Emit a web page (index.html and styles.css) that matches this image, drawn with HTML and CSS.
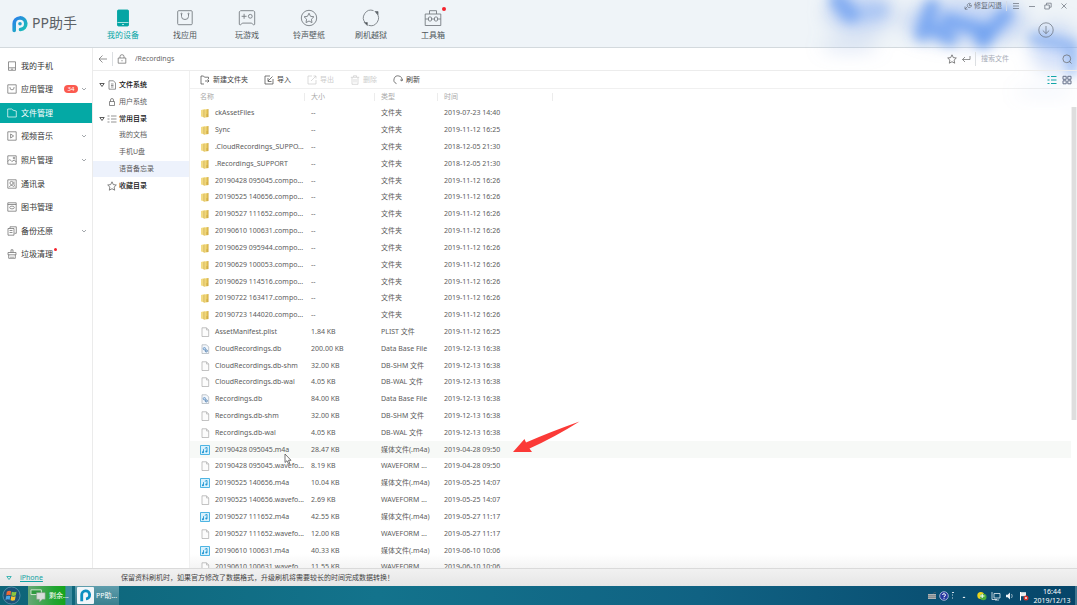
FILE: index.html
```html
<!DOCTYPE html>
<html lang="zh-CN">
<head>
<meta charset="utf-8">
<title>PP助手</title>
<link rel="stylesheet" href="styles.css">
</head>
<body>
<svg class="defs" width="0" height="0" aria-hidden="true">
  <defs>
    <linearGradient id="gold" x1="0" x2="1"><stop offset="0" stop-color="#f7e49a"/><stop offset=".5" stop-color="#ecd06a"/><stop offset="1" stop-color="#cda63a"/></linearGradient>
    <linearGradient id="brand" x1="0" y1="0" x2="1" y2="1"><stop offset="0" stop-color="#2b7fea"/><stop offset="1" stop-color="#19c2b4"/></linearGradient>
  </defs>
  <symbol id="folder" viewBox="0 0 10 10"><path d="M1 2l4-1v8.500L1 8.600z" fill="#f3dc85"/><path d="M4 1.500l4.500-.5v8L4 9.700z" fill="url(#gold)"/><path d="M4 2v7.500M7 6v3" stroke="#c29a35" stroke-width=".6"/></symbol>
  <symbol id="file" viewBox="0 0 10 10"><path d="M2 .8h4.500L8.700 3v6.500H2z" fill="#fcfcfc" stroke="#a9a9a9" stroke-width=".7"/><path d="M6.500.8V3h2.200" fill="none" stroke="#a9a9a9" stroke-width=".6"/></symbol>
  <symbol id="db" viewBox="0 0 10 10"><path d="M2 .8h4.500L8.700 3v6.500H2z" fill="#f4f8fc" stroke="#a9b0b8" stroke-width=".7"/><circle cx="4.400" cy="4.700" r="1.200" fill="#cfe0f0" stroke="#5d8fc4" stroke-width=".8"/><circle cx="6.300" cy="6.900" r="1.100" fill="#cfe0f0" stroke="#4a77a8" stroke-width=".8"/></symbol>
  <symbol id="music" viewBox="0 0 10 10"><path d="M.5.500h9v9h-9z" fill="#d9f1fc" stroke="#3cade0" stroke-width=".9"/><path d="M3.500 7.500V4.200M7 6.600V2.400L4.800 3.300" fill="none" stroke="#2196d3" stroke-width=".9"/><circle cx="2.900" cy="7.300" r="1" fill="#2196d3"/><circle cx="6.300" cy="6.600" r="1" fill="#2196d3"/></symbol>
  <symbol id="chev" viewBox="0 0 6 6"><path d="M1 2l2 2 2-2" fill="none" stroke="#8d9297" stroke-width=".8"/></symbol>
  <symbol id="star" viewBox="0 0 10 10"><path d="M5 .8l1.300 2.800 3 .4-2.200 2.100.6 3.100L5 7.700 2.300 9.200l.6-3.100L.7 4l3-.4z" fill="none" stroke="currentColor" stroke-width=".8"/></symbol>
  <symbol id="tri" viewBox="0 0 6 6"><path d="M.8 1.500h4.400L3 4.500z" fill="#fff" stroke="#333" stroke-width=".8"/></symbol>
  <symbol id="pp" viewBox="0 0 18 18"><path d="M3.200 15.500V8.800a5.800 5.800 0 1 1 6.300 5.700" fill="none" stroke="url(#brand)" stroke-width="3.600" stroke-linecap="round"/><circle cx="9" cy="8.800" r="1.800" fill="#1fa5cf"/></symbol>
</svg>
<div class="app">
  <header class="top">
    <div class="brand"><svg class="logo"><use href="#pp"/></svg><span>PP助手</span></div>
    <nav class="tabs">
      <a class="tab on" href="#device"><svg viewBox="0 0 18 18"><rect x="3.500" y="1" width="11" height="16" rx="1" fill="#04a5a4"/><path d="M3.500 13.500h11M8 15.500h2" stroke="#d6f2f2" stroke-width=".8"/></svg>我的设备</a>
      <a class="tab" href="#apps"><svg viewBox="0 0 18 18"><rect x="1.700" y="1.700" width="14.500" height="14" rx="1"/><path d="M5.500 5v2.500a3.500 3 0 0 0 7 0V5"/><circle cx="5.500" cy="4.800" r=".6"/><circle cx="12.500" cy="4.800" r=".6"/></svg>找应用</a>
      <a class="tab" href="#games"><svg viewBox="0 0 18 18"><path d="M2.500 1.700h13l1.200 1.200v12.400l-1 .8-2-2H4.300l-2 2-1-.8V2.900z"/><path d="M3.600 7.300h5M6.100 4.800v5"/><circle cx="12.300" cy="7.300" r="1.900"/></svg>玩游戏</a>
      <a class="tab" href="#ring"><svg viewBox="0 0 18 18"><circle cx="9" cy="9" r="7.700"/><path d="M9 4.200l1.500 3.100 3.400.5-2.500 2.400.6 3.400L9 12l-3 1.600.6-3.400-2.500-2.400 3.400-.5z"/></svg>铃声壁纸</a>
      <a class="tab" href="#flash"><svg viewBox="0 0 18 18"><path d="M11.500 1.600A7.600 7.600 0 0 0 3.500 14M6.500 16.300A7.600 7.600 0 0 0 14.500 4"/><path d="M13 2.500h3v3zM2.300 13.500h3v3z" fill="#444a50"/></svg>刷机越狱</a>
      <a class="tab" href="#tools"><svg viewBox="0 0 18 18"><path d="M1.200 5h15.600v11.500H1.200zM5.500 5V1.700h7V5M1.200 10h3.300M7.500 10h3M13.500 10h3.300"/><rect x="4.500" y="8" width="3" height="4" rx="1"/><rect x="10.500" y="8" width="3" height="4" rx="1"/></svg>工具箱<i class="dot"></i></a>
    </nav>
    <div class="corner">
      <div class="wins">
        <button class="fix"><svg viewBox="0 0 8 8"><path d="M1 7l2.500-2.500M3.500 4.500C2.500 2 5 .8 6.500 1.500L5 3l.6.900L7.300 3C8 5 5.500 6.300 4 5.200M1 4.500v2.700h2.500"/></svg>修复闪退</button>
        <button aria-label="菜单"><svg viewBox="0 0 8 8"><path d="M1 1.500h6M1 4h6M1 6.500h6"/></svg></button>
        <button aria-label="最小化"><svg viewBox="0 0 8 8"><path d="M1 4.500h6"/></svg></button>
        <button aria-label="还原"><svg viewBox="0 0 8 8"><path d="M.8 3h4.500v4H.8zM2.500 3V1.200h4.700v4H5.300"/></svg></button>
        <button aria-label="关闭"><svg viewBox="0 0 8 8"><path d="M1.500 1.500l5 5M6.500 1.500l-5 5"/></svg></button>
      </div>
      <button class="down" aria-label="下载"><svg viewBox="0 0 16 16"><circle cx="8" cy="8" r="7.200"/><path d="M8 4v7.500M4.800 8.500L8 11.600l3.200-3.100"/></svg></button>
    </div>
  </header>
  <svg class="haze" viewBox="0 0 277 110" aria-hidden="true">
    <defs><filter id="b1" x="-50%" y="-50%" width="200%" height="200%"><feGaussianBlur stdDeviation="6"/></filter><filter id="b2" x="-50%" y="-80%" width="200%" height="260%"><feGaussianBlur stdDeviation="9"/></filter></defs>
    <g filter="url(#b2)" fill="#a9c4f5"><ellipse cx="60" cy="12" rx="34" ry="20" opacity=".6"/><ellipse cx="50" cy="46" rx="28" ry="5" opacity=".4"/><ellipse cx="165" cy="22" rx="62" ry="22" opacity=".6"/><ellipse cx="255" cy="48" rx="24" ry="24" opacity=".5"/><ellipse cx="245" cy="92" rx="30" ry="5" opacity=".15"/></g>
    <g filter="url(#b1)" fill="none" stroke="#6c9ff0" stroke-linecap="round"><path d="M38 0l12 14" stroke-width="18" opacity=".75"/><path d="M60 14l22-4" stroke-width="14" opacity=".3"/><path d="M132 6l-10 28M128 26l22 12" stroke-width="15" opacity=".8"/><path d="M148 20l34 10M206 14l-24 26" stroke-width="15" opacity=".8"/><path d="M184 32v8" stroke-width="18" opacity=".5"/><path d="M234 38l38 8M272 50v20" stroke-width="12" opacity=".6"/></g>
  </svg>
  <div class="body">
    <nav class="side"><div class="items">
      <a href="#1"><svg viewBox="0 0 10 10"><path d="M1.500.8h7v6h-7zM1.500 6.800v2.500h7V6.800M4 8.200h2"/></svg>我的手机</a>
      <a href="#2"><svg viewBox="0 0 10 10"><path d="M.8.800h8.400v8.400H.8zM3 3v.8a2 2 0 0 0 4 0V3"/></svg>应用管理<b class="badge">34</b><svg class="chev"><use href="#chev"/></svg></a>
      <a href="#3" class="on"><svg viewBox="0 0 10 10"><path d="M.7 1h4l1.300 1.200L9.300 3v6H.7z"/></svg>文件管理</a>
      <a href="#4"><svg viewBox="0 0 10 10"><path d="M.8.800h8.400v8.400H.8zM3.600 3l3 2-3 2z"/></svg>视频音乐<svg class="chev"><use href="#chev"/></svg></a>
      <a href="#5"><svg viewBox="0 0 10 10"><path d="M.8.800h8.400v8.400H.8zM.8 6.500l2-2 2 2 2.500-1.500 2 2"/><circle cx="7" cy="3" r=".8"/></svg>照片管理<svg class="chev"><use href="#chev"/></svg></a>
      <a href="#6"><svg viewBox="0 0 10 10"><path d="M.8.800h8.400v8.400H.8zM2.500 8c0-2 4-2 4 0M7 2.500v3.500l1 1.500"/><circle cx="4.500" cy="4" r="1.600"/></svg>通讯录</a>
      <a href="#7"><svg viewBox="0 0 10 10"><path d="M.8.800h8.400v8.400H.8zM.8 2.500h8.400"/><ellipse cx="5" cy="5.500" rx="2.300" ry="1.400"/></svg>图书管理</a>
      <a href="#8"><svg viewBox="0 0 10 10"><path d="M3 2.500V.8h6.300v6.500H7.500M1 2.500h6v6.700H1zM2.500 4.500h3M2.500 6.500h3"/></svg>备份还原<svg class="chev"><use href="#chev"/></svg></a>
      <a href="#9"><svg viewBox="0 0 10 10"><path d="M4 3.500V.8h2v2.700M1 5.800V3.500h8v2.300zM1.700 5.800v3.500h6.600V5.800M4 9V7.500M6 9V7.500"/></svg>垃圾清理<i class="dot"></i></a>
    </div></nav>
    <section class="work">
      <div class="pathbar">
        <button aria-label="返回"><svg viewBox="0 0 10 10"><path d="M9 5H1M4.500 1.500L1 5l3.500 3.500"/></svg></button>
        <i class="bar"></i>
        <svg viewBox="0 0 10 10"><path d="M1.200 4h7.600v5.200H1.200zM3 4V2.500a2 1.800 0 0 1 4 0V4M5 6v1.300"/></svg>
        <input class="path" aria-label="路径" value="/Recordings">
        <button aria-label="收藏"><svg class="s"><use href="#star"/></svg></button>
        <button aria-label="前往"><svg viewBox="0 0 10 10"><path d="M9 2v3.500H1.500M4 3L1.500 5.500 4 8"/></svg></button>
        <i class="bar"></i>
        <input class="search" type="search" aria-label="搜索文件" placeholder="搜索文件">
        <button aria-label="搜索"><svg viewBox="0 0 10 10"><circle cx="4.800" cy="4.800" r="3.900"/><path d="M7.500 7.500l2 2"/></svg></button>
      </div>
      <div class="panes">
        <nav class="tree"><div class="items">
          <a class="h" href="#a"><svg class="tri"><use href="#tri"/></svg><svg viewBox="0 0 10 10"><path d="M2 .8h4.500L8.500 3v6.200H2zM4 4h2.500M4 5.500h2.500M4 7h2.500"/></svg>文件系统</a>
          <a class="sub" href="#b"><svg viewBox="0 0 10 10"><path d="M2.500 4.500h5v4h-5zM3.500 4.500V3a1.500 1.500 0 0 1 3 0v1.500"/></svg>用户系统</a>
          <a class="h" href="#c"><svg class="tri"><use href="#tri"/></svg><svg viewBox="0 0 10 10"><path d="M.5 2h2M4 2h5.500M.5 5h2M4 5h5.500M.5 8h2M4 8h5.500"/></svg>常用目录</a>
          <a class="leaf" href="#d">我的文档</a>
          <a class="leaf" href="#e">手机U盘</a>
          <a class="leaf on" href="#f">语音备忘录</a>
          <a class="h fav" href="#g"><svg><use href="#star"/></svg>收藏目录</a>
        </div></nav>
        <main class="files">
          <div class="tools">
            <button><svg viewBox="0 0 10 10"><path d="M4 9H1V1h2.500l1 1.200H8.500v2M5 6h4M7.500 4.500L9 6 7.500 7.500"/></svg>新建文件夹</button>
            <button><svg viewBox="0 0 10 10"><path d="M6 1H1v8h8V4M8.500 1.500L4 6M4 3v3.500h3.500"/></svg>导入</button>
            <button disabled><svg viewBox="0 0 10 10"><path d="M5 1H1v8h8V5M4 6l5-5M6.500 1H9v2.500"/></svg>导出</button>
            <button disabled><svg viewBox="0 0 10 10"><path d="M.8 2.300h8.400M3.500 2V.8h3V2M2 2.300v7h6v-7M4 4v3.500M6 4v3.500"/></svg>删除</button>
            <button><svg viewBox="0 0 10 10"><path d="M3.500 8.600A4 4 0 1 1 8.900 5.500M7.200 4.800l1.700 1.200 1-1.800"/></svg>刷新</button>
            <span class="views">
              <button class="list" aria-label="列表"><svg viewBox="0 0 10 10"><path d="M.5 1.500h2M4 1.500h5.500M.5 5h2M4 5h5.500M.5 8.500h2M4 8.500h5.500"/></svg></button>
              <button aria-label="网格"><svg viewBox="0 0 10 10"><path d="M1 1.300h3.200v3H1zM5.800 1.300H9v3H5.800zM1 5.800h3.200v3H1zM5.800 5.800H9v3H5.800z"/></svg></button>
            </span>
          </div>
          <div class="scroll">
            <table>
              <colgroup><col class="c1"><col class="c2"><col class="c3"><col class="c4"><col></colgroup>
              <thead><tr><th>名称</th><th>大小</th><th>类型</th><th>时间</th><th></th></tr></thead>
              <tbody>
<tr><td><svg><use href="#folder"/></svg>ckAssetFiles</td><td>--</td><td>文件夹</td><td>2019-07-23 14:40</td><td></td></tr>
<tr><td><svg><use href="#folder"/></svg>Sync</td><td>--</td><td>文件夹</td><td>2019-11-12 16:25</td><td></td></tr>
<tr><td><svg><use href="#folder"/></svg>.CloudRecordings_SUPPO...</td><td>--</td><td>文件夹</td><td>2018-12-05 21:30</td><td></td></tr>
<tr><td><svg><use href="#folder"/></svg>.Recordings_SUPPORT</td><td>--</td><td>文件夹</td><td>2018-12-05 21:30</td><td></td></tr>
<tr><td><svg><use href="#folder"/></svg>20190428 095045.compo...</td><td>--</td><td>文件夹</td><td>2019-11-12 16:26</td><td></td></tr>
<tr><td><svg><use href="#folder"/></svg>20190525 140656.compo...</td><td>--</td><td>文件夹</td><td>2019-11-12 16:26</td><td></td></tr>
<tr><td><svg><use href="#folder"/></svg>20190527 111652.compo...</td><td>--</td><td>文件夹</td><td>2019-11-12 16:26</td><td></td></tr>
<tr><td><svg><use href="#folder"/></svg>20190610 100631.compo...</td><td>--</td><td>文件夹</td><td>2019-11-12 16:26</td><td></td></tr>
<tr><td><svg><use href="#folder"/></svg>20190629 095944.compo...</td><td>--</td><td>文件夹</td><td>2019-11-12 16:26</td><td></td></tr>
<tr><td><svg><use href="#folder"/></svg>20190629 100053.compo...</td><td>--</td><td>文件夹</td><td>2019-11-12 16:26</td><td></td></tr>
<tr><td><svg><use href="#folder"/></svg>20190629 114516.compo...</td><td>--</td><td>文件夹</td><td>2019-11-12 16:26</td><td></td></tr>
<tr><td><svg><use href="#folder"/></svg>20190722 163417.compo...</td><td>--</td><td>文件夹</td><td>2019-11-12 16:26</td><td></td></tr>
<tr><td><svg><use href="#folder"/></svg>20190723 144020.compo...</td><td>--</td><td>文件夹</td><td>2019-11-12 16:26</td><td></td></tr>
<tr><td><svg><use href="#file"/></svg>AssetManifest.plist</td><td>1.84 KB</td><td>PLIST 文件</td><td>2019-11-12 16:25</td><td></td></tr>
<tr><td><svg><use href="#db"/></svg>CloudRecordings.db</td><td>200.00 KB</td><td>Data Base File</td><td>2019-12-13 16:38</td><td></td></tr>
<tr><td><svg><use href="#file"/></svg>CloudRecordings.db-shm</td><td>32.00 KB</td><td>DB-SHM 文件</td><td>2019-12-13 16:38</td><td></td></tr>
<tr><td><svg><use href="#file"/></svg>CloudRecordings.db-wal</td><td>4.05 KB</td><td>DB-WAL 文件</td><td>2019-12-13 16:38</td><td></td></tr>
<tr><td><svg><use href="#db"/></svg>Recordings.db</td><td>84.00 KB</td><td>Data Base File</td><td>2019-12-13 16:38</td><td></td></tr>
<tr><td><svg><use href="#file"/></svg>Recordings.db-shm</td><td>32.00 KB</td><td>DB-SHM 文件</td><td>2019-12-13 16:38</td><td></td></tr>
<tr><td><svg><use href="#file"/></svg>Recordings.db-wal</td><td>4.05 KB</td><td>DB-WAL 文件</td><td>2019-12-13 16:38</td><td></td></tr>
<tr class="on"><td><svg><use href="#music"/></svg>20190428 095045.m4a</td><td>28.47 KB</td><td>媒体文件(.m4a)</td><td>2019-04-28 09:50</td><td></td></tr>
<tr><td><svg><use href="#file"/></svg>20190428 095045.wavefo...</td><td>8.19 KB</td><td>WAVEFORM ...</td><td>2019-04-28 09:50</td><td></td></tr>
<tr><td><svg><use href="#music"/></svg>20190525 140656.m4a</td><td>10.04 KB</td><td>媒体文件(.m4a)</td><td>2019-05-25 14:07</td><td></td></tr>
<tr><td><svg><use href="#file"/></svg>20190525 140656.wavefo...</td><td>2.69 KB</td><td>WAVEFORM ...</td><td>2019-05-25 14:07</td><td></td></tr>
<tr><td><svg><use href="#music"/></svg>20190527 111652.m4a</td><td>42.55 KB</td><td>媒体文件(.m4a)</td><td>2019-05-27 11:17</td><td></td></tr>
<tr><td><svg><use href="#file"/></svg>20190527 111652.wavefo...</td><td>12.00 KB</td><td>WAVEFORM ...</td><td>2019-05-27 11:17</td><td></td></tr>
<tr><td><svg><use href="#music"/></svg>20190610 100631.m4a</td><td>40.33 KB</td><td>媒体文件(.m4a)</td><td>2019-06-10 10:06</td><td></td></tr>
<tr><td><svg><use href="#file"/></svg>20190610 100631.wavefo...</td><td>11.55 KB</td><td>WAVEFORM ...</td><td>2019-06-10 10:06</td><td></td></tr>
              </tbody>
            </table>
            <i class="thumb"></i>
          </div>
        </main>
      </div>
    </section>
  </div>
  <footer class="status"><svg viewBox="0 0 6 6"><path d="M.8 1.500h4.400L3 4.500z" fill="none" stroke="#18a9a7" stroke-width=".8"/></svg><a href="#iphone">iPhone</a><span>保留资料刷机时，如果官方修改了数据格式，升级刷机将需要较长的时间完成数据转换！</span></footer>
  <div class="taskbar">
    <button class="orb" aria-label="开始"><svg viewBox="0 0 20 20"><circle cx="10" cy="10" r="9" fill="#1c5278" stroke="#6da4bd" stroke-width=".7"/><path d="M5 6q2.500-1.500 4.500-.5L9 9.700q-2-1-4.500.3z" fill="#ef6a35" stroke="none"/><path d="M10.300 6q2.500 1 5 0L14.500 10q-2.500 1-4.700 0z" fill="#8cc63f" stroke="none"/><path d="M4.300 10.700q2.500-1 4.500-.2L8 14.500q-2-1-4.300.2z" fill="#4ba7e8" stroke="none"/><path d="M9.700 10.900q2.500 1 4.700 0L13.500 15q-2.500 1-4.500 0z" fill="#fbc62f" stroke="none"/></svg></button>
    <button class="task green"><svg viewBox="0 0 18 18"><path d="M1 3h11v5H1z" fill="#2f9a3f" stroke="#d5e8d3" stroke-width="1"/><path d="M7 6h9v7h-3l-3 3v-3H7z" fill="#d9dedb" stroke="#929c95" stroke-width=".6"/></svg>剩余...</button>
    <button class="task"><svg viewBox="0 0 18 18"><rect width="18" height="18" rx="1" fill="#f1f6f9"/><g fill="none" stroke="#0b8fc0"><path d="M5 15V8.500a4.200 4.200 0 1 1 4.500 4" stroke-width="3"/></g></svg>PP助...</button>
    <div class="tray">
      <svg viewBox="0 0 10 10"><path d="M1 3h8v5H1z" fill="#aeb4b6"/><path d="M1 4.700h8M1 6.300h8M6 3l1-1.500h2" stroke="#5c6569" stroke-width=".6" fill="none"/></svg>
      <svg viewBox="0 0 10 10"><circle cx="5" cy="5" r="4.300" fill="#2638a0" stroke="#d8def5" stroke-width=".7"/><path d="M3.600 4a1.400 1.400 0 1 1 1.400 1.500v.8M5 7v.8" stroke="#fff" stroke-width="1" fill="none"/></svg>
      <svg class="tiny" viewBox="0 0 4 10"><path d="M1 1.500h2M1 4h1M1 7h1" stroke="#cfe0ea" stroke-width="1"/></svg>
      <svg class="gap" viewBox="0 0 10 10"><path d="M3.500 7L5 5.500 6.500 7z" fill="#fff"/></svg>
      <svg class="wide" viewBox="0 0 10 10"><circle cx="3.800" cy="4.500" r="3.500" fill="#e9d41e"/><circle cx="6.300" cy="6" r="3.200" fill="#49ad3d"/><path d="M3 5h4.500M5.200 3v4" stroke="#fff" stroke-width="1"/></svg>
      <svg class="gap" viewBox="0 0 10 10"><path d="M3 2.500h6v4.500H3zM1 1v7.500h5M4 9h4" stroke="#e5eef3" stroke-width=".8" fill="none"/></svg>
      <svg class="gap" viewBox="0 0 10 10"><path d="M1 3.800h1.700L5 1.500v7L2.700 6.300H1z" fill="#eef3f6"/><path d="M6.500 3q1.500 2 0 4" stroke="#b9cdd8" stroke-width=".8" fill="none"/></svg>
      <svg class="gap" viewBox="0 0 10 10"><path d="M1.500 1v8.500" stroke="#fff" stroke-width="1"/><path d="M2 1.200h5v4H2z" fill="#e9eef0"/><circle cx="7" cy="7" r="2.500" fill="#d8332b"/><path d="M6 6l2 2M8 6L6 8" stroke="#fff" stroke-width=".7"/></svg>
      <time>16:44<br>2019/12/13</time>
      <i class="peek"></i>
    </div>
  </div>
  <svg class="arrow" viewBox="0 0 68 34" aria-hidden="true"><path d="M1 31L12.500 18 14 21.500Q38 11 67.500 .5 43 16 17.500 27.500L20 31z" fill="#fb3a37"/></svg>
  <svg class="cursor" viewBox="0 0 8 12" aria-hidden="true"><path d="M1 1v8.500l2-1.800 1.500 3.300 1.300-.6L4.500 7.300H7z" fill="#fff" stroke="#555" stroke-width=".8"/></svg>
</div>
</body>
</html>
```
FILE: styles.css
```css
* { box-sizing: border-box; }
body { margin: 0; font: 7px/10px "Noto Sans", "Noto Sans CJK SC", sans-serif; color: #5c5c5c; }
a { color: inherit; text-decoration: none; }
button, input { font: inherit; color: inherit; background: none; border: 0; padding: 0; margin: 0; outline: 0; }
button { display: flex; align-items: center; white-space: nowrap; }
svg { display: block; flex: none; width: 10px; height: 10px; fill: none; stroke: currentColor; stroke-width: .7px; }
use { stroke: none; }
.defs { position: absolute; width: 0; height: 0; }
.app { position: relative; height: 100vh; display: flex; flex-direction: column; overflow: hidden; background: #fff; }

.top { display: flex; flex: none; height: 48px; background: #eff4f8; border-bottom: 1px solid #d3d9dd; }
.brand { display: flex; align-items: center; gap: 3px; width: 92px; padding-left: 11px; font-size: 14px; line-height: 20px; color: #5b6166; }
.brand span { padding-bottom: 2px; }
.logo { width: 18px; height: 18px; }
.tabs { display: flex; }
.tab { position: relative; width: 62px; padding-top: 9px; display: flex; flex-direction: column; align-items: center; gap: 2px; font-size: 8px; line-height: 12px; color: #50565b; }
.tab svg { width: 18px; height: 18px; color: #777d82; stroke-width: .9px; }
.tab.on { color: #04a5a4; }
.tab.on svg { color: #04a5a4; }
.dot { width: 3px; height: 3px; border-radius: 50%; background: #f5222d; }
.tab .dot { position: absolute; top: 7px; right: 18px; width: 4px; height: 4px; }
.corner { margin-left: auto; padding: 1px 9px 0 0; display: flex; flex-direction: column; align-items: flex-end; gap: 11px; position: relative; z-index: 2; color: #666d78; }
.wins { display: flex; gap: 8px; }
.wins svg { width: 8px; height: 8px; }
.fix { gap: 2px; padding-right: 4px; margin-right: -3px; border-right: 1px solid #d3dbe8; }
.down { margin-right: 14px; }
.down svg { width: 16px; height: 16px; }
.haze { position: absolute; top: 0; right: 0; width: 277px; height: 110px; z-index: 1; pointer-events: none; }

.body { flex: 1; min-height: 0; display: flex; }
.items { display: grid; grid-auto-rows: 1fr; }
.side { flex: none; width: 93px; padding-top: 6px; border-right: 1px solid #ebebeb; font-size: 8px; color: #333; }
.side .items { height: 212px; }
.side a { display: flex; align-items: center; gap: 4px; padding: 0 5px 0 7px; white-space: nowrap; }
.side a > svg:first-child { color: #666; }
.side a.on { background: #04a9a5; color: #fff; margin: 2px 0; }
.side a.on > svg:first-child { color: #fff; }
.side .chev { width: 6px; height: 6px; margin-left: auto; }
.side .badge { margin-left: auto; width: 14px; border-radius: 4px; background: #fb5a4f; color: #fff; font-size: 6px; line-height: 8px; text-align: center; font-weight: 400; }
.side .badge + .chev { margin-left: -1px; }
.side .dot { align-self: flex-start; margin: 6px 0 0 -3px; }

.work { flex: 1; min-width: 0; display: flex; flex-direction: column; }
.pathbar { display: flex; align-items: center; gap: 4px; height: 23px; padding: 0 5px; border-bottom: 1px solid #ececec; color: #666; position: relative; z-index: 2; }
.bar { width: 1px; height: 14px; background: #dcdfe2; }
.path { flex: 1; min-width: 0; padding-left: 4px; }
.search { width: 78px; padding-left: 1px; -webkit-appearance: none; appearance: none; }
.search::placeholder { color: #a9aeb8; opacity: 1; }
.panes { flex: 1; min-height: 0; display: flex; }
.tree { flex: none; width: 96px; padding-top: 6px; }
.tree .items { height: 117px; }
.tree a { display: flex; align-items: center; }
.tree .h { gap: 2px; padding-left: 6px; color: #111; font-weight: 500; }
.tree .h svg { color: #666; }
.tree .h .tri { width: 6px; height: 6px; }
.tree .fav { padding-left: 14px; }
.tree .sub { padding-left: 14px; gap: 2px; }
.tree .leaf { padding-left: 26px; }
.tree .on { background: #edf2fc; }

.files { flex: 1; min-width: 0; display: flex; flex-direction: column; border-left: 1px solid #f0f0f0; background: linear-gradient(to top, #f4f4f4, #fff 14px); }
.tools { display: flex; align-items: center; gap: 16px; height: 18px; padding: 0 5px 0 10px; border-bottom: 1px solid #f0f0f0; flex: none; color: #444; }
.tools button { gap: 3px; }
.tools button:disabled { color: #ccc; }
.views { margin-left: auto; display: flex; gap: 5px; position: relative; z-index: 2; color: #66718a; }
.views svg { stroke-width: 1px; }
.views .list { color: #12a5a8; }
.scroll { flex: 1; min-height: 0; overflow: hidden; display: flex; align-items: flex-start; }
table { flex: 1; min-width: 0; table-layout: fixed; border-collapse: collapse; height: 487px; }
.c1 { width: 115px; } .c2 { width: 70px; } .c3 { width: 63px; } .c4 { width: 115px; }
th, td { padding: 0 0 0 6px; text-align: left; font-weight: 400; white-space: nowrap; line-height: 10px; }
th { height: 16px; color: #aaa; background: linear-gradient(#ececec, #ececec) right / 1px 8px no-repeat; }
th:last-child { background: none; }
th:first-child, td:first-child { padding-left: 10px; }
td svg { display: inline-block; vertical-align: top; margin-right: 5px; }
tr.on { background: #f7f9f7; }
.thumb { flex: none; width: 6px; height: 313px; margin-top: 18px; background: #dedede; border-left: 1px solid #f0f0f0; border-right: 1px solid #f0f0f0; }

.status { flex: none; height: 18px; display: flex; align-items: center; padding-left: 6px; background: linear-gradient(#f1f1f1, #e6e6e6); border-top: 1px solid #dadada; color: #444; }
.status svg { width: 6px; height: 6px; }
.status a { width: 101px; margin-left: 8px; color: #12a3a3; text-decoration: underline; }
.taskbar { flex: none; height: 19px; display: flex; align-items: center; background: linear-gradient(90deg, #0d6478, #13738c 35%, #106283 65%, #064569); color: #fff; }
.orb { width: 28px; padding-left: 2px; }
.orb svg { width: 19px; height: 19px; }
.task { width: 44px; height: 19px; padding: 0 2px; gap: 2px; background: linear-gradient(#5f9dac, #39808f); overflow: hidden; }
.task.green { background: linear-gradient(90deg, #68a777, #21a532 60%, #16a51b 84%, #3c8da0 86%); margin-right: 3px; }
.task svg { width: 17px; height: 17px; stroke: none; }
.tray { margin-left: auto; display: flex; align-items: center; gap: 2px; }
.tray svg { stroke: none; }
.tray .tiny { width: 4px; }
.tray .gap { margin-left: 2px; }
.tray .wide { margin-left: 6px; }
time { width: 42px; text-align: center; line-height: 9px; }
.peek { width: 2px; height: 19px; background: #3f7590; }
.arrow { position: absolute; left: 512px; top: 421px; width: 68px; height: 34px; stroke: none; }
.cursor { position: absolute; left: 284px; top: 453px; width: 8px; height: 12px; }
```
